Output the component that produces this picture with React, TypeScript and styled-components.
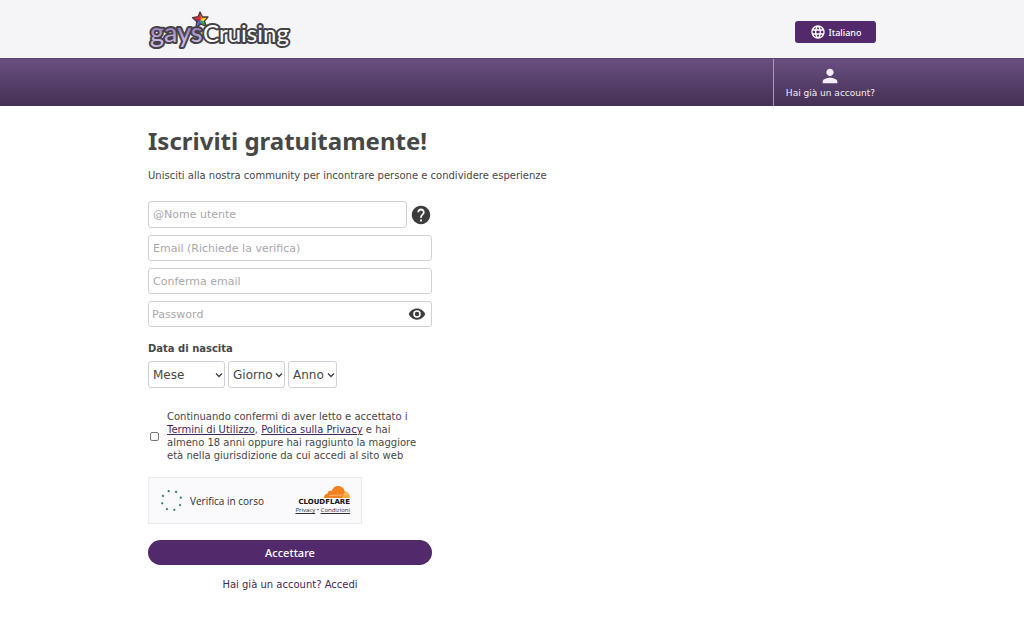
import React from 'react';
import styled, { createGlobalStyle } from 'styled-components';

const GlobalStyle = createGlobalStyle`
  *, *::before, *::after { box-sizing: border-box; }
  body {
    margin: 0;
    background: #fff;
    color: #474747;
    font-family: 'DejaVu Sans', Verdana, sans-serif;
    font-size: 10px;
  }
`;

const Container = styled.div`
  width: 100%;
  max-width: 728px;
  margin: 0 auto;
  display: flex;
  justify-content: space-between;
`;

const TopBar = styled.header`
  background: #f5f5f7;
`;

const TopInner = styled(Container)`
  height: 58px;
  align-items: center;
`;

const LogoLink = styled.a`
  display: block;
  line-height: 0;
`;

const LanguageButton = styled.button`
  display: flex;
  align-items: center;
  justify-content: center;
  gap: 3px;
  width: 81px;
  height: 22px;
  margin-top: 6px;
  padding: 0;
  border: 0;
  border-radius: 3px;
  background: #52296a;
  color: #fff;
  font: 500 9px 'Noto Sans', sans-serif;
`;

const NavBar = styled.nav`
  border-top: 1px solid #5b4270;
  background: linear-gradient(#6a4e80, #56406b 50%, #463053);
`;

const NavInner = styled(Container)`
  justify-content: flex-end;
`;

const AccountLink = styled.a`
  display: flex;
  flex-direction: column;
  align-items: center;
  height: 47px;
  padding: 6px 1px 0 12px;
  border-left: 1px solid #a99ab5;
  color: #f4ecf8;
  font-size: 9px;
  line-height: 12px;
  text-decoration: none;
`;

const Main = styled.main`
  width: 100%;
  max-width: 728px;
  margin: 0 auto;
  padding: 17px 0 40px;
`;

const Title = styled.h1`
  margin: 0;
  color: #474747;
  font: 700 24px/36px 'Noto Sans', sans-serif;
`;

const Intro = styled.p`
  margin: 9px 0 18px;
  font-size: 10px;
  line-height: 15px;
`;

const Form = styled.form`
  max-width: 284px;
`;

const Fields = styled.div`
  display: flex;
  flex-direction: column;
  gap: 7px;
`;

const FieldRow = styled.div`
  display: flex;
  align-items: center;
  gap: 3px;
`;

const TextInput = styled.input`
  display: block;
  width: 100%;
  min-width: 0;
  height: 27px;
  padding: 0 4px;
  border: 1px solid #d2cfd8;
  border-radius: 3px;
  background: #fff;
  color: #474747;
  font: 11px 'DejaVu Sans', Verdana, sans-serif;
  &::placeholder { color: #a8a8ac; opacity: 1; }
`;

const ShortInput = styled(TextInput)`
  height: 26px;
`;

const IconButton = styled.button`
  display: block;
  flex: none;
  padding: 0;
  border: 0;
  background: none;
  color: #3d3d3d;
  line-height: 0;
`;

const PasswordBox = styled.div`
  display: flex;
  align-items: center;
  height: 26px;
  padding-right: 5px;
  border: 1px solid #d2cfd8;
  border-radius: 3px;
`;

const PasswordInput = styled(TextInput)`
  height: 24px;
  padding: 0 3px;
  border: 0;
`;

const BirthGroup = styled.fieldset`
  margin: 0;
  padding: 14px 0 0;
  border: 0;
`;

const Legend = styled.legend`
  float: left;
  width: 100%;
  padding: 0;
  margin-bottom: 5px;
  font-size: 10px;
  font-weight: 700;
  line-height: 15px;
`;

const SelectRow = styled.div`
  clear: both;
  display: flex;
  gap: 3px;
`;

const SelectBox = styled.div<{ $width: number }>`
  display: grid;
  width: ${(p) => p.$width}px;
  align-items: center;
  > * { grid-area: 1 / 1; }
  > svg { justify-self: end; margin-right: 2px; pointer-events: none; }
`;

const Select = styled.select`
  appearance: none;
  width: 100%;
  height: 27px;
  padding: 0 4px;
  border: 1px solid #d2cfd8;
  border-radius: 3px;
  background: #fff;
  color: #474747;
  font: 12px 'DejaVu Sans', Verdana, sans-serif;
`;

const Terms = styled.div`
  display: flex;
  align-items: center;
  gap: 8px;
  max-width: 272px;
  margin-top: 22px;
  padding-left: 2px;
`;

const Checkbox = styled.input`
  appearance: none;
  flex: none;
  width: 9px;
  height: 9px;
  margin: 0;
  border: 1px solid #77777b;
  border-radius: 2px;
  background: #fff;
  &:checked { background: #52296a; }
`;

const TermsLabel = styled.label`
  font-size: 10px;
  line-height: 13px;
  a { color: #432858; }
`;

const Challenge = styled.section`
  display: flex;
  align-items: center;
  max-width: 214px;
  height: 47px;
  margin-top: 15px;
  padding: 0 11px;
  border: 1px solid #e9e8ec;
  background: #faf9fb;
  color: #303030;
  font-family: 'Open Sans', sans-serif;
`;

const ChallengeText = styled.span`
  flex: 1;
  margin-left: 7px;
  font: 10px 'Open Sans', sans-serif;
`;

const Brand = styled.div`
  display: flex;
  flex-direction: column;
  align-items: flex-end;
`;

const BrandName = styled.span`
  color: #111;
  font: 700 7px/8px 'DejaVu Sans', sans-serif;
`;

const BrandLinks = styled.span`
  font: 6px/9px 'Open Sans', sans-serif;
  a { color: #303030; }
`;

const Submit = styled.button`
  display: block;
  width: 100%;
  height: 25px;
  margin-top: 16px;
  padding: 0;
  border: 0;
  border-radius: 13px;
  background: #52296a;
  color: #fff;
  font: 500 11px 'Noto Sans', sans-serif;
`;

const LoginLink = styled.a`
  display: block;
  margin-top: 12px;
  color: #432858;
  font-size: 10px;
  line-height: 15px;
  text-align: center;
  text-decoration: none;
`;

const starPath = 'M52 5l2.500 5 5.500 0-3.500 4.200 2 5.300-5.500-2.300-5 3 .7-5.700-4.200-3.800 5.600-1z';

const Logo = () => (
  <svg width="144" height="44" viewBox="0 0 144 44" role="img" aria-label="gaysCruising">
    <defs>
      <linearGradient id="lilac" x1="0" y1="0" x2="0" y2="1">
        <stop offset="0.2" stopColor="#8563b5" />
        <stop offset="0.8" stopColor="#cbb8e2" />
      </linearGradient>
      <clipPath id="star">
        <path d={starPath} />
      </clipPath>
    </defs>
    <g fontFamily="Lato, sans-serif" fontWeight="400" stroke="#444246" strokeWidth="4" strokeLinejoin="round" paintOrder="stroke">
      <text x="2" y="35" fontSize="27" fill="url(#lilac)">gays</text>
      <text x="55" y="35" fontSize="24" fill="#fff">Cruising</text>
    </g>
    <g clipPath="url(#star)">
      <path d="M43 2h10v12H43z" fill="#e12c32" />
      <path d="M52 2h10v8l-9 3z" fill="#f28c20" />
      <path d="M52 13l10-5v8z" fill="#f5dc22" />
      <path d="M52 13l10 3v7h-8z" fill="#37a548" />
      <path d="M52 13l3 10h-9z" fill="#315ec1" />
      <path d="M52 13l-6 9h-4V11z" fill="#793092" />
    </g>
    <path d={starPath} fill="none" stroke="#4a3940" strokeWidth="1.300" strokeLinejoin="round" />
  </svg>
);

const Globe = () => (
  <svg width="16" height="16" viewBox="0 0 24 24" fill="currentColor" aria-hidden="true">
    <path d="M11.990 2C6.470 2 2 6.480 2 12s4.470 10 9.990 10C17.520 22 22 17.520 22 12S17.520 2 11.990 2zm6.930 6h-2.950a15.650 15.650 0 0 0-1.380-3.560A8.030 8.030 0 0 1 18.920 8zM12 4.040c.83 1.200 1.480 2.530 1.910 3.960h-3.820c.43-1.430 1.080-2.760 1.910-3.960zM4.260 14C4.100 13.360 4 12.690 4 12s.1-1.360.26-2h3.380a16.500 16.500 0 0 0 0 4H4.260zm.82 2h2.950c.32 1.250.78 2.450 1.380 3.560A7.990 7.990 0 0 1 5.080 16zm2.950-8H5.080a7.990 7.990 0 0 1 4.330-3.560A15.650 15.650 0 0 0 8.030 8zM12 19.960c-.83-1.200-1.480-2.530-1.910-3.960h3.820A13.900 13.900 0 0 1 12 19.960zM14.340 14H9.660a14.700 14.700 0 0 1 0-4h4.680a14.700 14.700 0 0 1 0 4zm.25 5.560c.6-1.110 1.060-2.310 1.380-3.560h2.950a8.030 8.030 0 0 1-4.330 3.560zM16.360 14a16.500 16.500 0 0 0 0-4h3.380c.16.640.26 1.310.26 2s-.1 1.360-.26 2h-3.380z" />
  </svg>
);

const Person = () => (
  <svg width="22" height="22" viewBox="0 0 24 24" fill="currentColor" aria-hidden="true">
    <path d="M12 12c2.210 0 4-1.790 4-4s-1.790-4-4-4-4 1.790-4 4 1.790 4 4 4zm0 2c-2.670 0-8 1.340-8 4v2h16v-2c0-2.660-5.330-4-8-4z" />
  </svg>
);

const Help = () => (
  <svg width="22" height="22" viewBox="0 0 24 24" fill="currentColor" aria-hidden="true">
    <path d="M12 2C6.480 2 2 6.480 2 12s4.480 10 10 10 10-4.480 10-10S17.520 2 12 2zm1 17h-2v-2h2v2zm2.070-7.750l-.9.920C13.450 12.900 13 13.500 13 15h-2v-.5c0-1.100.45-2.100 1.170-2.830l1.240-1.260c.37-.36.590-.86.590-1.410 0-1.100-.9-2-2-2s-2 .9-2 2H8c0-2.210 1.790-4 4-4s4 1.790 4 4c0 .88-.36 1.680-.93 2.250z" />
  </svg>
);

const Eye = () => (
  <svg width="18" height="18" viewBox="0 0 24 24" fill="currentColor" aria-hidden="true">
    <path d="M12 4.500C7 4.500 2.730 7.610 1 12c1.730 4.390 6 7.500 11 7.500s9.270-3.110 11-7.500c-1.730-4.390-6-7.500-11-7.500zM12 17a5 5 0 1 1 0-10 5 5 0 0 1 0 10zm0-8a3 3 0 1 0 0 6 3 3 0 0 0 0-6z" />
  </svg>
);

const Chevron = () => (
  <svg width="8" height="6" viewBox="0 0 8 6" fill="none" stroke="#3d3d3d" strokeWidth="1.300" aria-hidden="true">
    <path d="M1 1.500l3 3 3-3" />
  </svg>
);

const Spinner = () => (
  <svg width="23" height="23" viewBox="0 0 23 23" fill="#2c7b68" aria-hidden="true">
    {Array.from({ length: 8 }, (_, i) => {
      const a = ((i * 45 + 28) * Math.PI) / 180;
      return <circle key={i} cx={11.5 + 9.7 * Math.cos(a)} cy={11.5 + 9.7 * Math.sin(a)} r="1.100" />;
    })}
  </svg>
);

const Cloud = () => (
  <svg width="26" height="12" viewBox="0 0 26 12" aria-hidden="true">
    <path d="M17.500 12l.7-2.300c.8-3.300 1.400-4.300 2.800-4.300 3 0 5 2.800 5 6.600z" fill="#fbad41" />
    <path d="M0 12C0 9.500 1.500 7.800 3.700 7.600 3.500 5.500 5.600 4 7.500 5 8.700 1.900 11 0 14 0c3.700 0 6.300 2.300 6.800 5.500L18.500 11l-.4 1z" fill="#f48120" />
    <path d="M5 9.500l13.200-.5M19.500 8.300l4-.4" stroke="#fff" strokeWidth=".4" />
  </svg>
);

const DateSelect = ({ label, width }: { label: string; width: number }) => (
  <SelectBox $width={width}>
    <Select aria-label={label} defaultValue="">
      <option value="">{label}</option>
    </Select>
    <Chevron />
  </SelectBox>
);

export default function App() {
  const [visible, setVisible] = React.useState(false);
  return (
    <>
      <GlobalStyle />
      <TopBar>
        <TopInner>
          <LogoLink href="#"><Logo /></LogoLink>
          <LanguageButton type="button"><Globe />Italiano</LanguageButton>
        </TopInner>
      </TopBar>
      <NavBar>
        <NavInner>
          <AccountLink href="#"><Person />Hai già un account?</AccountLink>
        </NavInner>
      </NavBar>
      <Main>
        <Title>Iscriviti gratuitamente!</Title>
        <Intro>Unisciti alla nostra community per incontrare persone e condividere esperienze</Intro>
        <Form onSubmit={(e) => e.preventDefault()}>
          <Fields>
            <FieldRow>
              <TextInput aria-label="Nome utente" placeholder="@Nome utente" />
              <IconButton type="button" aria-label="Aiuto"><Help /></IconButton>
            </FieldRow>
            <ShortInput type="email" aria-label="Email" placeholder="Email (Richiede la verifica)" />
            <ShortInput type="email" aria-label="Conferma email" placeholder="Conferma email" />
            <PasswordBox>
              <PasswordInput type={visible ? 'text' : 'password'} aria-label="Password" placeholder="Password" />
              <IconButton type="button" aria-label="Mostra password" onClick={() => setVisible(!visible)}><Eye /></IconButton>
            </PasswordBox>
          </Fields>
          <BirthGroup>
            <Legend>Data di nascita</Legend>
            <SelectRow>
              <DateSelect label="Mese" width={77} />
              <DateSelect label="Giorno" width={57} />
              <DateSelect label="Anno" width={49} />
            </SelectRow>
          </BirthGroup>
          <Terms>
            <Checkbox type="checkbox" id="terms" />
            <TermsLabel htmlFor="terms">
              Continuando confermi di aver letto e accettato i <a href="#">Termini di Utilizzo</a>, <a href="#">Politica sulla Privacy</a> e hai almeno 18 anni oppure hai raggiunto la maggiore età nella giurisdizione da cui accedi al sito web
            </TermsLabel>
          </Terms>
          <Challenge>
            <Spinner />
            <ChallengeText>Verifica in corso</ChallengeText>
            <Brand>
              <Cloud />
              <BrandName>CLOUDFLARE</BrandName>
              <BrandLinks><a href="#">Privacy</a> • <a href="#">Condizioni</a></BrandLinks>
            </Brand>
          </Challenge>
          <Submit type="submit">Accettare</Submit>
          <LoginLink href="#">Hai già un account? Accedi</LoginLink>
        </Form>
      </Main>
    </>
  );
}
